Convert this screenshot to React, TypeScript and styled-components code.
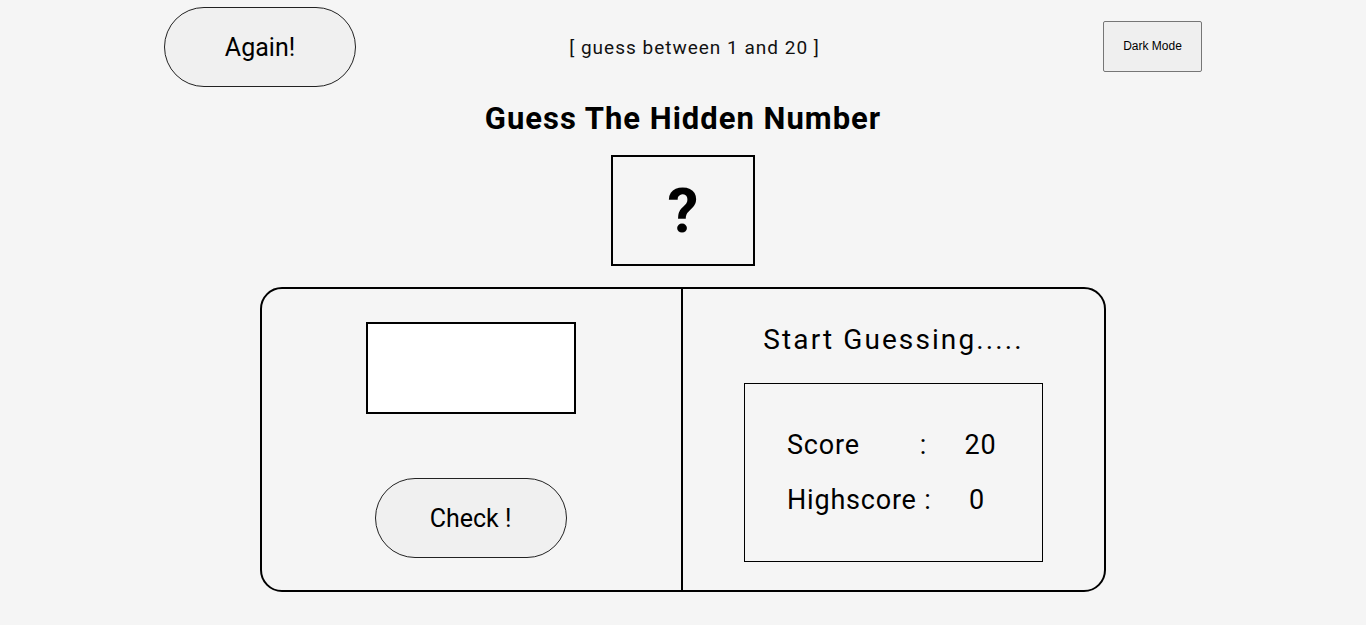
import React from "react";
import styled, { createGlobalStyle } from "styled-components";

const Global = createGlobalStyle`
  html, body { margin: 0; padding: 0; background: #f5f5f5; }
  body { font-family: "Roboto", "Liberation Sans", sans-serif; color: #000; }
`;

const Page = styled.div`
  padding-top: 7px;
  display: flex;
  flex-direction: column;
  align-items: center;
`;

const Header = styled.header`
  align-self: stretch;
  margin: 0 164px 0 164px;
  display: grid;
  grid-template-columns: 192px 1fr 99px;
  align-items: center;
`;

const PillButton = styled.button`
  width: 192px;
  height: 80px;
  border: 1px solid #222;
  border-radius: 40px;
  background: #f0f0f0;
  font-family: "Roboto", "Liberation Sans", sans-serif;
  font-size: 25px;
  color: #000;
  padding: 0;
  cursor: pointer;
`;

const Hint = styled.p`
  margin: 0;
  padding-right: 70px;
  text-align: center;
  font-size: 19px;
  letter-spacing: 1px;
  color: #111;
`;

const ModeButton = styled.button`
  width: 99px;
  height: 51px;
  margin-bottom: 2px;
  border: 1px solid #767676;
  border-radius: 2px;
  background: #efefef;
  font-family: "Liberation Sans", "Roboto", sans-serif;
  font-size: 12px;
  color: #000;
  padding: 0;
`;

const Title = styled.h1`
  margin: 14px 0 0;
  font-size: 31px;
  line-height: 36px;
  font-weight: 700;
  letter-spacing: 1px;
`;

const SecretBox = styled.div`
  margin-top: 18px;
  width: 140px;
  height: 107px;
  border: 2px solid #000;
  display: flex;
  align-items: center;
  justify-content: center;
  font-size: 62px;
  font-weight: 700;
`;

const Card = styled.section`
  margin-top: 21px;
  width: 842px;
  height: 301px;
  border: 2px solid #000;
  border-radius: 22px;
  display: grid;
  grid-template-columns: 419px 2px 1fr;
`;

const Divider = styled.div`
  background: #000;
`;

const LeftCol = styled.div`
  display: flex;
  flex-direction: column;
  align-items: center;
  padding-top: 33px;
`;

const GuessInput = styled.input`
  box-sizing: border-box;
  width: 210px;
  height: 92px;
  margin-right: 2px;
  border: 2px solid #000;
  border-radius: 0;
  background: #fff;
  outline: none;
  font-size: 40px;
  text-align: center;
`;

const CheckButton = styled(PillButton)`
  margin-top: 64px;
  margin-right: 2px;
`;

const RightCol = styled.div`
  display: flex;
  flex-direction: column;
  align-items: center;
  padding-top: 34px;
`;

const Message = styled.p`
  margin: 0;
  font-size: 28px;
  line-height: 34px;
  letter-spacing: 2.1px;
`;

const ScoreBox = styled.div`
  margin-top: 26px;
  width: 297px;
  height: 177px;
  border: 1px solid #000;
  display: flex;
  flex-direction: column;
  justify-content: center;
  gap: 22px;
`;

const ScoreRow = styled.p`
  margin: 0 0 0 42px;
  white-space: pre;
  font-size: 27px;
  line-height: 33px;
  letter-spacing: 0.8px;
`;

export default function App() {
  return (
    <>
      <Global />
      <Page>
        <Header>
          <PillButton>Again!</PillButton>
          <Hint>[ guess between 1 and 20 ]</Hint>
          <ModeButton>Dark Mode</ModeButton>
        </Header>
        <Title>Guess The Hidden Number</Title>
        <SecretBox>?</SecretBox>
        <Card>
          <LeftCol>
            <GuessInput type="number" aria-label="guess" />
            <CheckButton>Check !</CheckButton>
          </LeftCol>
          <Divider />
          <RightCol>
            <Message>Start Guessing.....</Message>
            <ScoreBox>
              <ScoreRow>{"Score        :     20"}</ScoreRow>
              <ScoreRow>{"Highscore :     0"}</ScoreRow>
            </ScoreBox>
          </RightCol>
        </Card>
      </Page>
    </>
  );
}
